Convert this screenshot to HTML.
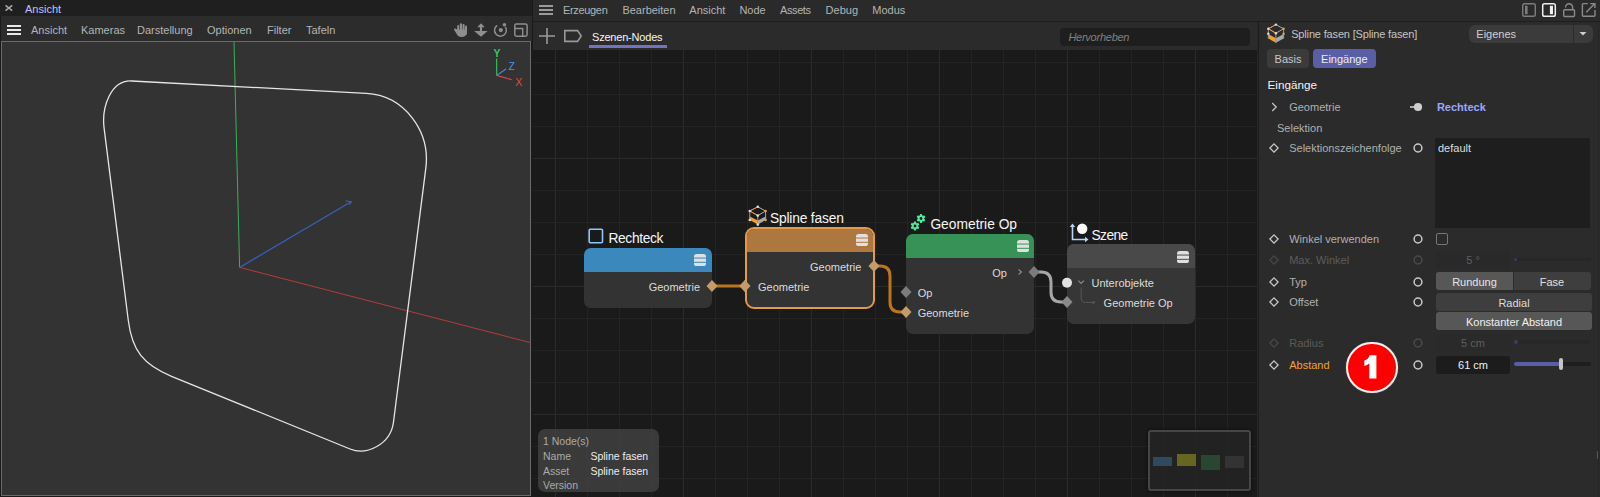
<!DOCTYPE html>
<html><head><meta charset="utf-8">
<style>
*{box-sizing:border-box}
html,body{margin:0;padding:0}
body{width:1600px;height:497px;overflow:hidden;position:relative;background:#1a1a1a;font-family:"Liberation Sans",sans-serif;font-size:11px;color:#b4b4b4}
.a{position:absolute}
.t{position:absolute;white-space:nowrap;line-height:13px;font-size:11px}
svg{position:absolute;overflow:visible}
</style></head><body>

<!-- ============ LEFT: VIEWPORT ============ -->
<div class="a" style="left:0;top:0;width:531.5px;height:16px;background:#1f1f1f"></div>
<svg style="left:0;top:0" width="20" height="16"><path d="M5.5 5.3L12.2 10.7M12.2 5.3L5.5 10.7" stroke="#a8a8a8" stroke-width="1.5"/></svg>
<div class="t" style="left:25px;top:2.5px;color:#bcc2ff">Ansicht</div>

<div class="a" style="left:1px;top:16px;width:530.5px;height:25px;background:#2c2c2c"></div>
<svg style="left:0;top:16px" width="30" height="25"><rect x="7" y="9" width="14" height="2" fill="#e8e8e8"/><rect x="7" y="13" width="14" height="2" fill="#e8e8e8"/><rect x="7" y="17" width="14" height="2" fill="#e8e8e8"/></svg>
<div class="t" style="left:31px;top:23.7px">Ansicht</div>
<div class="t" style="left:81px;top:23.7px">Kameras</div>
<div class="t" style="left:137px;top:23.7px">Darstellung</div>
<div class="t" style="left:207px;top:23.7px">Optionen</div>
<div class="t" style="left:267px;top:23.7px">Filter</div>
<div class="t" style="left:306px;top:23.7px">Tafeln</div>

<svg style="left:440px;top:16px" width="92" height="25">
 <g fill="#8e8e8e">
  <rect x="457.2" y="9" width="2.1" height="9" rx="1" transform="translate(-440 0)"/>
  <rect x="459.9" y="7.3" width="2.1" height="10" rx="1" transform="translate(-440 0)"/>
  <rect x="462.5" y="8" width="2.1" height="10" rx="1" transform="translate(-440 0)"/>
  <rect x="465" y="9.5" width="2" height="9" rx="1" transform="translate(-440 0)"/>
  <path d="M17.2 13.5 H27 V16.5 A5.5 5.5 0 0 1 21.5 21 A5.3 5.3 0 0 1 16.6 17.8 L14 13.8 A1 1 0 0 1 15.3 12.6 Z"/>
  <path d="M41 7.2L44.8 11.2H37.2Z"/><rect x="39.95" y="10.5" width="2.1" height="5"/><path d="M34.1 15H47.6L41 20.8Z"/>
  <circle cx="60.8" cy="14.1" r="2.1"/><circle cx="64.4" cy="8.8" r="1.8"/>
 </g>
 <path d="M57.2 9.3 A5.9 5.9 0 1 0 65.3 10.9" fill="none" stroke="#8e8e8e" stroke-width="1.5"/>
 <rect x="74.8" y="7.9" width="12.3" height="12.3" rx="1.6" fill="none" stroke="#8e8e8e" stroke-width="1.5"/>
 <path d="M75 12.5H82.7V20" fill="none" stroke="#8e8e8e" stroke-width="1.4"/>
</svg>
<!-- viewport -->
<div class="a" style="left:1px;top:41px;width:530px;height:455px;background:#333;border:1px solid #6a6a6a"></div>
<svg style="left:0;top:0" width="532" height="497">
  <!-- axes -->
  <line x1="234" y1="42" x2="239.6" y2="267.4" stroke="#3fae5a" stroke-width="1"/>
  <line x1="239.6" y1="267.4" x2="530" y2="342.5" stroke="#b33c3c" stroke-width="1"/>
  <line x1="239.6" y1="267.4" x2="351.5" y2="201.6" stroke="#3562c0" stroke-width="1.2"/>
  <path d="M345.5 201 L351.5 201.6 L349.5 205" fill="none" stroke="#3562c0" stroke-width="1"/>
  <!-- spline -->
  <path d="M131.7 81.0 L366.3 93.4 C404.0 95.4 430.6 130.9 425.8 168.3 L393.5 422.0 C390.6 444.8 366.3 455.6 350.1 449.0 L171.5 376.3 C143.4 364.8 132.1 350.8 128.3 320.5 L104.1 128.2 C101.5 107.7 110.5 79.9 131.7 81.0Z" fill="none" stroke="#e6e6e6" stroke-width="1.3"/>
  <!-- gizmo -->
  <line x1="496.7" y1="75.4" x2="496.7" y2="58.5" stroke="#33cc55" stroke-width="1.1"/>
  <line x1="496.7" y1="75.4" x2="506" y2="69" stroke="#4d8ef0" stroke-width="1.1"/>
  <line x1="496.7" y1="75.4" x2="511.7" y2="79.7" stroke="#e04848" stroke-width="1.1"/>
</svg>
<div class="t" style="left:493.6px;top:46.5px;color:#2fcc5a;font-size:10.5px;font-weight:bold">Y</div>
<div class="t" style="left:508.5px;top:60px;color:#4d8ef0;font-size:10.5px">Z</div>
<div class="t" style="left:515.3px;top:75.5px;color:#e04848;font-size:10.5px">X</div>

<!-- ============ NODE EDITOR ============ -->
<div class="a" style="left:533px;top:0;width:1067px;height:21px;background:#2a2a2a"></div>
<div class="a" style="left:533px;top:21px;width:1067px;height:1px;background:#1e1e1e"></div>
<div class="a" style="left:533px;top:22px;width:725px;height:28px;background:#2b2b2b"></div>
<div class="a" style="left:533px;top:50px;width:725px;height:447px;background:#1a1a1a"></div>


<!-- node menu -->
<svg style="left:533px;top:0" width="30" height="21"><rect x="6" y="5" width="14" height="2" fill="#9a9a9a"/><rect x="6" y="9" width="14" height="2" fill="#9a9a9a"/><rect x="6" y="13" width="14" height="2" fill="#9a9a9a"/></svg>
<div class="t" style="left:563px;top:3.9px;letter-spacing:-0.33px">Erzeugen</div>
<div class="t" style="left:622.4px;top:3.9px">Bearbeiten</div>
<div class="t" style="left:689.3px;top:3.9px">Ansicht</div>
<div class="t" style="left:739.4px;top:3.9px">Node</div>
<div class="t" style="left:780px;top:3.9px;letter-spacing:-0.4px">Assets</div>
<div class="t" style="left:825.6px;top:3.9px">Debug</div>
<div class="t" style="left:872.3px;top:3.9px">Modus</div>
<!-- toolbar -->
<svg style="left:533px;top:22px" width="60" height="28">
 <path d="M14 6V22M6 14H22" stroke="#9a9a9a" stroke-width="1.6"/>
 <path d="M31.8 8.6H44.6L48.2 14L44.6 19.4H31.8Z" fill="none" stroke="#999" stroke-width="1.6"/>
</svg>
<div class="t" style="left:592px;top:30.5px;color:#f6f6f6;letter-spacing:-0.2px">Szenen-Nodes</div>
<div class="a" style="left:589px;top:45px;width:78px;height:3px;background:#7274c0"></div>
<div class="a" style="left:1060px;top:28px;width:190px;height:18px;background:#1e1e1e;border-radius:4px"></div>
<div class="t" style="left:1068.4px;top:30.7px;color:#808080;font-style:italic;letter-spacing:-0.25px">Hervorheben</div>
<!-- grid -->
<svg style="left:0;top:0" width="1600" height="497">
<rect x="555" y="50" width="1" height="447" fill="#2a2a2a"/>
<rect x="587" y="50" width="1" height="447" fill="#242424"/>
<rect x="619" y="50" width="1" height="447" fill="#242424"/>
<rect x="651" y="50" width="1" height="447" fill="#242424"/>
<rect x="683" y="50" width="1" height="447" fill="#2a2a2a"/>
<rect x="715" y="50" width="1" height="447" fill="#242424"/>
<rect x="747" y="50" width="1" height="447" fill="#242424"/>
<rect x="779" y="50" width="1" height="447" fill="#242424"/>
<rect x="811" y="50" width="1" height="447" fill="#2a2a2a"/>
<rect x="843" y="50" width="1" height="447" fill="#242424"/>
<rect x="875" y="50" width="1" height="447" fill="#242424"/>
<rect x="907" y="50" width="1" height="447" fill="#242424"/>
<rect x="939" y="50" width="1" height="447" fill="#2a2a2a"/>
<rect x="971" y="50" width="1" height="447" fill="#242424"/>
<rect x="1003" y="50" width="1" height="447" fill="#242424"/>
<rect x="1035" y="50" width="1" height="447" fill="#242424"/>
<rect x="1067" y="50" width="1" height="447" fill="#2a2a2a"/>
<rect x="1099" y="50" width="1" height="447" fill="#242424"/>
<rect x="1131" y="50" width="1" height="447" fill="#242424"/>
<rect x="1163" y="50" width="1" height="447" fill="#242424"/>
<rect x="1195" y="50" width="1" height="447" fill="#2a2a2a"/>
<rect x="1227" y="50" width="1" height="447" fill="#242424"/>
<rect x="533" y="62" width="725" height="1" fill="#242424"/>
<rect x="533" y="94" width="725" height="1" fill="#242424"/>
<rect x="533" y="126" width="725" height="1" fill="#242424"/>
<rect x="533" y="158" width="725" height="1" fill="#2a2a2a"/>
<rect x="533" y="190" width="725" height="1" fill="#242424"/>
<rect x="533" y="222" width="725" height="1" fill="#242424"/>
<rect x="533" y="254" width="725" height="1" fill="#242424"/>
<rect x="533" y="286" width="725" height="1" fill="#2a2a2a"/>
<rect x="533" y="318" width="725" height="1" fill="#242424"/>
<rect x="533" y="350" width="725" height="1" fill="#242424"/>
<rect x="533" y="382" width="725" height="1" fill="#242424"/>
<rect x="533" y="414" width="725" height="1" fill="#2a2a2a"/>
<rect x="533" y="446" width="725" height="1" fill="#242424"/>
<rect x="533" y="478" width="725" height="1" fill="#242424"/>
 <!-- wires -->
 <path d="M712 286H745" stroke="#bb7619" stroke-width="3" fill="none"/>
 <path d="M874 266H880Q890 266 890 276V302Q890 312 900 312H906" stroke="#bb7619" stroke-width="3" fill="none"/>
 <path d="M1034 272H1041Q1051 272 1051 282V292Q1051 302 1061 302H1067" stroke="#a6a6a6" stroke-width="3" fill="none"/>
</svg>


<!-- NODE: Rechteck -->
<svg style="left:588px;top:228px" width="16" height="16"><rect x="1.2" y="1.2" width="13.3" height="13.6" rx="1" fill="none" stroke="#8cc8ff" stroke-width="1.6"/></svg>
<div class="t" style="left:608.4px;top:231.3px;font-size:13.8px;line-height:16px;color:#f6f6f6;letter-spacing:-0.34px">Rechteck</div>
<div class="a" style="left:584px;top:248px;width:128px;height:60px;border-radius:7px;background:#333;overflow:hidden"><div style="height:24px;background:#3a88bc"></div></div>
<svg style="left:694px;top:254px" width="12" height="12"><rect width="12" height="12" rx="2.6" fill="#e0e0e0"/><rect y="3.5" width="12" height="1.1" fill="#3a88bc" opacity=".9"/><rect y="7.8" width="12" height="1.1" fill="#3a88bc" opacity=".9"/></svg>
<div class="t" style="left:600px;width:100px;text-align:right;top:280.7px;color:#dcdcdc">Geometrie</div>
<svg style="left:704.5px;top:279px" width="14" height="14"><path d="M7 0.9L12.5 7L7 13.1L1.5 7Z" fill="#c49c6a"/></svg><svg style="left:738px;top:279px" width="14" height="14"><path d="M7 0.9L12.5 7L7 13.1L1.5 7Z" fill="#c49c6a"/></svg>

<!-- NODE: Spline fasen -->
<svg style="left:747px;top:205px" width="22" height="22">
 <path d="M3 15L11 19.6L11 12Z" fill="none"/>
 <path d="M2.8 11.5V15L10.8 19.6V15.5L2.8 11.5Z" fill="#f0a030"/>
 <path d="M10.8 15.5V19.6L18.6 15V11.5Z" fill="#a8a8a8"/>
 <path d="M2.8 6L10.8 1.8L18.6 6L10.8 10.6Z" fill="none" stroke="#b0b0b0" stroke-width="1"/>
 <path d="M2.8 6L10.8 1.8M2.8 6L10.8 10.6" fill="none" stroke="#e8902a" stroke-width="1"/>
 <path d="M2.8 6V15M18.6 6V15M10.8 10.6V19.6" fill="none" stroke="#a0a0a0" stroke-width="1"/>
 <circle cx="10.8" cy="1.8" r="1.3" fill="#ddd"/><circle cx="2.8" cy="6" r="1.3" fill="#ddd"/><circle cx="18.6" cy="6" r="1.3" fill="#f0a030"/><circle cx="10.8" cy="10.6" r="1.3" fill="#ddd"/><circle cx="2.8" cy="15" r="1.3" fill="#ddd"/><circle cx="18.6" cy="15" r="1.3" fill="#f0a030"/><circle cx="10.8" cy="19.6" r="1.3" fill="#ddd"/>
</svg>
<div class="t" style="left:770px;top:211.3px;font-size:13.8px;line-height:16px;color:#f6f6f6;letter-spacing:-0.19px">Spline fasen</div>
<div class="a" style="left:744.8px;top:226.8px;width:129.8px;height:81.8px;border-radius:9px;background:#333;border:2px solid #e39a48;overflow:hidden"><div style="height:23px;background:#ae7740"></div></div>
<svg style="left:856px;top:234px" width="12" height="12"><rect width="12" height="12" rx="2.6" fill="#e0e0e0"/><rect y="3.5" width="12" height="1.1" fill="#ae7740" opacity=".9"/><rect y="7.8" width="12" height="1.1" fill="#ae7740" opacity=".9"/></svg>
<div class="t" style="left:760px;width:101.4px;text-align:right;top:261.2px;color:#dcdcdc">Geometrie</div>
<div class="t" style="left:758px;top:281.3px;color:#dcdcdc">Geometrie</div>
<svg style="left:738px;top:279px" width="14" height="14"><path d="M7 0.9L12.5 7L7 13.1L1.5 7Z" fill="#c49c6a"/></svg><svg style="left:867px;top:259px" width="14" height="14"><path d="M7 0.9L12.5 7L7 13.1L1.5 7Z" fill="#c49c6a"/></svg>

<!-- NODE: Geometrie Op -->

<svg style="left:906px;top:210px" width="24" height="24">
 <path d="M13.54 5.65 L14.19 4.07 L15.81 4.07 L16.46 5.65 L16.73 5.81 L18.43 5.59 L19.24 6.98 L18.20 8.34 L18.20 8.66 L19.24 10.02 L18.43 11.41 L16.73 11.19 L16.46 11.35 L15.81 12.93 L14.19 12.93 L13.54 11.35 L13.27 11.19 L11.57 11.41 L10.76 10.02 L11.80 8.66 L11.80 8.34 L10.76 6.98 L11.57 5.59 L13.27 5.81Z M16.4 8.5A1.4 1.4 0 1 0 13.6 8.5A1.4 1.4 0 1 0 16.4 8.5Z" fill="#50eb9b" fill-rule="evenodd"/>
 <path d="M7.54 13.15 L8.19 11.57 L9.81 11.57 L10.46 13.15 L10.73 13.31 L12.43 13.09 L13.24 14.48 L12.20 15.84 L12.20 16.16 L13.24 17.52 L12.43 18.91 L10.73 18.69 L10.46 18.85 L9.81 20.43 L8.19 20.43 L7.54 18.85 L7.27 18.69 L5.57 18.91 L4.76 17.52 L5.80 16.16 L5.80 15.84 L4.76 14.48 L5.57 13.09 L7.27 13.31Z M10.4 16A1.4 1.4 0 1 0 7.6 16A1.4 1.4 0 1 0 10.4 16Z" fill="#50eb9b" fill-rule="evenodd"/>
</svg>
<div class="t" style="left:930.4px;top:217.2px;font-size:13.8px;line-height:16px;color:#f6f6f6">Geometrie Op</div>
<div class="a" style="left:906px;top:234px;width:128px;height:100px;border-radius:7px;background:#333;overflow:hidden"><div style="height:24px;background:#379258"></div></div>
<svg style="left:1016.5px;top:240px" width="12" height="12"><rect width="12" height="12" rx="2.6" fill="#e0e0e0"/><rect y="3.5" width="12" height="1.1" fill="#379258" opacity=".9"/><rect y="7.8" width="12" height="1.1" fill="#379258" opacity=".9"/></svg>
<div class="t" style="left:900px;width:107px;text-align:right;top:266.5px;color:#dcdcdc">Op</div>
<svg style="left:1016px;top:268px" width="8" height="8"><path d="M2.5 1.5L5.5 4L2.5 6.5" fill="none" stroke="#8a8a8a" stroke-width="1.2"/></svg>
<div class="t" style="left:917.7px;top:286.9px;color:#dcdcdc">Op</div>
<div class="t" style="left:917.7px;top:306.5px;color:#dcdcdc">Geometrie</div>
<svg style="left:1027px;top:265px" width="14" height="14"><path d="M7 0.9L12.5 7L7 13.1L1.5 7Z" fill="#7c7c7c"/></svg><svg style="left:899px;top:285.3px" width="14" height="14"><path d="M7 0.9L12.5 7L7 13.1L1.5 7Z" fill="#7c7c7c"/></svg><svg style="left:899px;top:305px" width="14" height="14"><path d="M7 0.9L12.5 7L7 13.1L1.5 7Z" fill="#c49c6a"/></svg>

<!-- NODE: Szene -->
<svg style="left:1066px;top:218px" width="28" height="26">
 <path d="M6.5 7V21.5H20" fill="none" stroke="#b4d6f8" stroke-width="1.6"/>
 <path d="M3.8 9L6.5 5.5L9.2 9Z" fill="#b4d6f8"/><path d="M19 18.8L22.5 21.5L19 24.2Z" fill="#b4d6f8"/>
 <circle cx="16.2" cy="10.7" r="5.2" fill="#fafafa"/>
</svg>
<div class="t" style="left:1091.5px;top:228.2px;font-size:13.8px;line-height:16px;color:#f6f6f6;letter-spacing:-0.6px">Szene</div>
<div class="a" style="left:1067px;top:244px;width:128px;height:80px;border-radius:7px;background:#363636;overflow:hidden"><div style="height:24px;background:#494949"></div></div>
<svg style="left:1177.3px;top:250.5px" width="12" height="12"><rect width="12" height="12" rx="2.6" fill="#e0e0e0"/><rect y="3.5" width="12" height="1.1" fill="#494949" opacity=".9"/><rect y="7.8" width="12" height="1.1" fill="#494949" opacity=".9"/></svg>
<svg style="left:1076px;top:276px" width="24" height="32">
 <path d="M2.3 4.6L5.1 7.4L7.9 4.6" fill="none" stroke="#8a8a8a" stroke-width="1.2"/>
 <path d="M5.2 11.5V22Q5.2 26.4 9.6 26.4H17" fill="none" stroke="#575757" stroke-width="1"/>
 <circle cx="17.5" cy="26.4" r="1.3" fill="#575757"/>
</svg>
<div class="t" style="left:1091.5px;top:277.3px;color:#dcdcdc">Unterobjekte</div>
<div class="t" style="left:1103.6px;top:297.3px;color:#dcdcdc">Geometrie Op</div>
<svg style="left:1061px;top:277px" width="12" height="12"><circle cx="6" cy="5.7" r="5" fill="#e2e2e2"/></svg>
<svg style="left:1060.4px;top:295.3px" width="14" height="14"><path d="M7 0.9L12.5 7L7 13.1L1.5 7Z" fill="#8a8a8a"/></svg>

<!-- info box -->
<div class="a" style="left:538px;top:428.5px;width:120.5px;height:63.5px;border-radius:7px;background:rgba(64,64,64,.86)"></div>
<div class="t" style="left:543px;top:435px;font-size:10.5px;color:#ababab">1 Node(s)</div>
<div class="t" style="left:543px;top:450.2px;font-size:10.5px;color:#ababab">Name</div>
<div class="t" style="left:543px;top:464.7px;font-size:10.5px;color:#ababab">Asset</div>
<div class="t" style="left:543px;top:478.7px;font-size:10.5px;color:#ababab">Version</div>
<div class="t" style="left:590.4px;top:450.2px;font-size:10.5px;color:#ececec">Spline fasen</div>
<div class="t" style="left:590.4px;top:464.7px;font-size:10.5px;color:#ececec">Spline fasen</div>

<!-- minimap -->
<div class="a" style="left:1148px;top:430px;width:103px;height:60.5px;border-radius:3px;background:rgba(36,36,36,.8);border:2px solid #464646;box-shadow:0 0 3px 1px rgba(0,0,0,.35)"></div>
<div class="a" style="left:1152.7px;top:456.7px;width:19.2px;height:9.2px;background:#2d4a60"></div>
<div class="a" style="left:1176.9px;top:453.8px;width:19.1px;height:12.1px;background:#676620"></div>
<div class="a" style="left:1200.9px;top:454.7px;width:19.2px;height:14.9px;background:#294632"></div>
<div class="a" style="left:1224.9px;top:456px;width:19.2px;height:12px;background:#333"></div>


<!-- ============ ATTRIBUTE MANAGER ============ -->
<div class="a" style="left:1257px;top:22px;width:2px;height:475px;background:#262626"></div>
<div class="a" style="left:1258px;top:22px;width:1px;height:475px;background:#1e1e1e"></div>
<div class="a" style="left:1259px;top:22px;width:341px;height:475px;background:#2b2b2b"></div><div class="a" style="left:1597px;top:451px;width:2px;height:8px;border-radius:1px;background:#5a5a66"></div>
<svg style="left:1520px;top:0" width="80" height="21">
 <rect x="2.7" y="3.7" width="12.6" height="12.6" rx="1.8" fill="none" stroke="#7c7c7c" stroke-width="1.4"/>
 <rect x="5" y="5.8" width="2.6" height="8.4" fill="#7c7c7c"/>
 <rect x="22.7" y="3.7" width="12.6" height="12.6" rx="1.8" fill="none" stroke="#f0f0f0" stroke-width="1.5"/>
 <rect x="29.9" y="5.8" width="3.1" height="8.4" fill="#f0f0f0"/>
 <rect x="43.7" y="9.7" width="10.8" height="6.8" rx="1" fill="none" stroke="#8a8a8a" stroke-width="1.4"/>
 <path d="M45.6 7.6V7.2A3.5 3.5 0 0 1 52.6 7.2V9.6" fill="none" stroke="#8a8a8a" stroke-width="1.4"/>
 <path d="M67.8 3.6H63.4A1 1 0 0 0 62.4 4.6V15.2A1 1 0 0 0 63.4 16.2H74A1 1 0 0 0 75 15.2V10" fill="none" stroke="#8a8a8a" stroke-width="1.4"/>
 <path d="M66.2 12.3L74.4 4.1M70.3 3.6H74.9V8" fill="none" stroke="#8a8a8a" stroke-width="1.4"/>
</svg>
<div class="a" style="left:1259px;top:21px;width:338px;height:1px;background:#1e1e1e"></div>

<div class="a" style="left:1598px;top:22px;width:1px;height:475px;background:#262626"></div>
<!-- header -->
<svg style="left:1266px;top:23px" width="20" height="21">
 <path d="M2.3 11V15.5L9.9 19.8V15.3Z" fill="#f0a030"/>
 <path d="M9.9 15.3V19.8L17.6 15.5V11Z" fill="#a8a8a8"/>
 <path d="M2.3 5.8L9.9 1.6L17.6 5.8L9.9 10.2Z" fill="none" stroke="#a8a8a8" stroke-width="1"/>
 <path d="M2.3 5.8L9.9 1.6M2.3 5.8L9.9 10.2" fill="none" stroke="#e8902a" stroke-width="1"/>
 <path d="M2.3 5.8V15.5M17.6 5.8V15.5M9.9 10.2V19.8" fill="none" stroke="#999" stroke-width="1"/>
 <circle cx="9.9" cy="1.6" r="1.2" fill="#ddd"/><circle cx="2.3" cy="5.8" r="1.2" fill="#ddd"/><circle cx="17.6" cy="5.8" r="1.2" fill="#f0a030"/><circle cx="9.9" cy="10.2" r="1.2" fill="#ddd"/><circle cx="2.3" cy="10.8" r="1.2" fill="#ddd"/><circle cx="17.6" cy="10.8" r="1.2" fill="#f0a030"/>
</svg>
<div class="t" style="left:1291.2px;top:27.8px;color:#c4c4c4;letter-spacing:-0.16px">Spline fasen [Spline fasen]</div>
<div class="a" style="left:1469px;top:25px;width:124px;height:18px;border-radius:6px;background:#3b3b3b"></div>
<div class="a" style="left:1573px;top:25px;width:1px;height:18px;background:#2a2a2a"></div>
<div class="t" style="left:1476.3px;top:28.2px;color:#d0d0d0">Eigenes</div>
<svg style="left:1578px;top:30px" width="10" height="8"><path d="M1.5 2H8.5L5 5.6Z" fill="#cfcfcf"/></svg>

<!-- tabs -->
<div class="a" style="left:1267px;top:49px;width:42px;height:19px;border-radius:4px;background:#3b3b3b"></div>
<div class="t" style="left:1267px;width:42px;text-align:center;top:53.2px;color:#c8c8c8">Basis</div>
<div class="a" style="left:1313px;top:49px;width:62.7px;height:19px;border-radius:4px;background:#5a5ea6"></div>
<div class="t" style="left:1313px;width:62.7px;text-align:center;top:53.2px;color:#eeeeee">Eingänge</div>

<div class="t" style="left:1267.5px;top:77.6px;font-size:11.7px;line-height:14px;color:#f4f4f4">Eingänge</div>

<!-- rows -->
<svg style="left:1268px;top:101px" width="12" height="12"><path d="M4.2 2L8.2 6L4.2 10" fill="none" stroke="#c0c0c0" stroke-width="1.3"/></svg>
<div class="t" style="left:1289.2px;top:101.3px;color:#b0b0b0">Geometrie</div>
<svg style="left:1406px;top:101px" width="18" height="12"><path d="M4 6H11" stroke="#cfcfcf" stroke-width="1.6"/><circle cx="12" cy="6" r="4.1" fill="#cfcfcf"/></svg>
<div class="t" style="left:1436.9px;top:101.4px;color:#9ba6ff;font-weight:bold">Rechteck</div>
<div class="t" style="left:1277px;top:121.7px;color:#b0b0b0">Selektion</div><svg style="left:1268px;top:142.1px" width="12" height="12"><path d="M6 1.9L10.1 6L6 10.1L1.9 6Z" fill="none" stroke="#c8c8c8" stroke-width="1.3"/></svg><div class="t" style="left:1289.2px;top:142.4px;color:#b0b0b0">Selektionszeichenfolge</div><svg style="left:1412px;top:142px" width="12" height="12"><circle cx="6" cy="6" r="3.9" fill="none" stroke="#c8c8c8" stroke-width="1.5"/></svg>
<div class="a" style="left:1435.3px;top:138.2px;width:154.7px;height:89.5px;background:#1e1e1e"></div>
<div class="t" style="left:1438px;top:142.3px;color:#dedede">default</div>
<svg style="left:1268px;top:233.1px" width="12" height="12"><path d="M6 1.9L10.1 6L6 10.1L1.9 6Z" fill="none" stroke="#c8c8c8" stroke-width="1.3"/></svg><div class="t" style="left:1289.2px;top:233.4px;color:#b0b0b0">Winkel verwenden</div><svg style="left:1412px;top:233.1px" width="12" height="12"><circle cx="6" cy="6" r="3.9" fill="none" stroke="#c8c8c8" stroke-width="1.5"/></svg>
<div class="a" style="left:1436px;top:233.4px;width:12px;height:11.8px;border-radius:2px;border:1.5px solid #767676"></div>
<svg style="left:1268px;top:253.8px" width="12" height="12"><path d="M6 1.9L10.1 6L6 10.1L1.9 6Z" fill="none" stroke="#484848" stroke-width="1.3"/></svg><div class="t" style="left:1289.2px;top:254.1px;color:#5c5c5c">Max. Winkel</div><svg style="left:1412px;top:253.8px" width="12" height="12"><circle cx="6" cy="6" r="3.9" fill="none" stroke="#4a4a4a" stroke-width="1.5"/></svg>
<div class="a" style="left:1436px;top:251px;width:74px;height:17.2px;border-radius:3px;background:#292929"></div>
<div class="t" style="left:1436px;width:74px;text-align:center;top:253.9px;color:#5e5e5e">5 °</div>
<div class="a" style="left:1514px;top:257.5px;width:77px;height:3px;border-radius:2px;background:#272727"></div><div class="a" style="left:1514px;top:257.5px;width:3px;height:3px;border-radius:1.5px;background:#3a3c66"></div>
<svg style="left:1268px;top:276px" width="12" height="12"><path d="M6 1.9L10.1 6L6 10.1L1.9 6Z" fill="none" stroke="#c8c8c8" stroke-width="1.3"/></svg><div class="t" style="left:1289.2px;top:276.3px;color:#b0b0b0">Typ</div><svg style="left:1412px;top:276px" width="12" height="12"><circle cx="6" cy="6" r="3.9" fill="none" stroke="#c8c8c8" stroke-width="1.5"/></svg>
<div class="a" style="left:1436px;top:272px;width:155px;height:18px;border-radius:3px;background:#3e3e3e;overflow:hidden"><div style="width:77px;height:18px;background:#575757"></div></div>
<div class="a" style="left:1513px;top:272px;width:1px;height:18px;background:#2d2d2d"></div>
<div class="t" style="left:1436px;width:77px;text-align:center;top:275.6px;color:#e6e6e6">Rundung</div>
<div class="t" style="left:1513px;width:78px;text-align:center;top:275.6px;color:#e0e0e0">Fase</div>
<svg style="left:1268px;top:295.9px" width="12" height="12"><path d="M6 1.9L10.1 6L6 10.1L1.9 6Z" fill="none" stroke="#c8c8c8" stroke-width="1.3"/></svg><div class="t" style="left:1289.2px;top:296.2px;color:#b0b0b0">Offset</div><svg style="left:1412px;top:295.9px" width="12" height="12"><circle cx="6" cy="6" r="3.9" fill="none" stroke="#c8c8c8" stroke-width="1.5"/></svg>
<div class="a" style="left:1436px;top:293.2px;width:156px;height:17.8px;border-radius:3px;background:#3e3e3e"></div>
<div class="t" style="left:1436px;width:156px;text-align:center;top:296.5px;color:#dcdcdc">Radial</div>
<div class="a" style="left:1436px;top:312.4px;width:156px;height:17.2px;border-radius:3px;background:#575757"></div>
<div class="t" style="left:1436px;width:156px;text-align:center;top:315.5px;color:#f0f0f0">Konstanter Abstand</div>
<svg style="left:1268px;top:337.1px" width="12" height="12"><path d="M6 1.9L10.1 6L6 10.1L1.9 6Z" fill="none" stroke="#484848" stroke-width="1.3"/></svg><div class="t" style="left:1289.2px;top:337.4px;color:#5c5c5c">Radius</div><svg style="left:1412px;top:337.1px" width="12" height="12"><circle cx="6" cy="6" r="3.9" fill="none" stroke="#4a4a4a" stroke-width="1.5"/></svg>
<div class="a" style="left:1436.3px;top:334.4px;width:73.3px;height:17px;border-radius:3px;background:#2a2a2a"></div>
<div class="t" style="left:1436px;width:74px;text-align:center;top:337.4px;color:#5e5e5e">5 cm</div>
<div class="a" style="left:1514px;top:340px;width:77.4px;height:4px;border-radius:2px;background:#272727"></div><div class="a" style="left:1514px;top:340px;width:3.5px;height:4px;border-radius:2px;background:#3a3c66"></div>
<svg style="left:1268px;top:359px" width="12" height="12"><path d="M6 1.9L10.1 6L6 10.1L1.9 6Z" fill="none" stroke="#c8c8c8" stroke-width="1.3"/></svg><div class="t" style="left:1289.2px;top:359.3px;color:#f0a035">Abstand</div><svg style="left:1412px;top:359px" width="12" height="12"><circle cx="6" cy="6" r="3.9" fill="none" stroke="#c8c8c8" stroke-width="1.5"/></svg>
<div class="a" style="left:1436px;top:356px;width:74px;height:18px;border-radius:3px;background:#1c1c1c"></div>
<div class="t" style="left:1436px;width:74px;text-align:center;top:359.2px;color:#f0f0f0">61 cm</div>
<div class="a" style="left:1514px;top:362px;width:77.4px;height:4.2px;border-radius:2px;background:#1e1e1e"></div>
<div class="a" style="left:1514px;top:362px;width:47px;height:4.2px;border-radius:2px;background:#5a5ea8"></div>
<div class="a" style="left:1558.8px;top:358.2px;width:4.2px;height:11.5px;border-radius:2px;background:#c4c4c4"></div>

<!-- badge -->
<div class="a" style="left:1346.3px;top:342.1px;width:51.3px;height:51.3px;border-radius:50%;background:#fe0000;border:2px solid #f0f0f0;box-shadow:0 0 1px #888"></div>
<svg style="left:1346px;top:341px" width="52" height="52"><path d="M23.6 14.2H30.4V37.6H23.3V22.6Q21.2 24.3 18.3 25V19.6Q22.4 18.3 23.6 14.2Z" fill="#fff"/></svg>

</body></html>
